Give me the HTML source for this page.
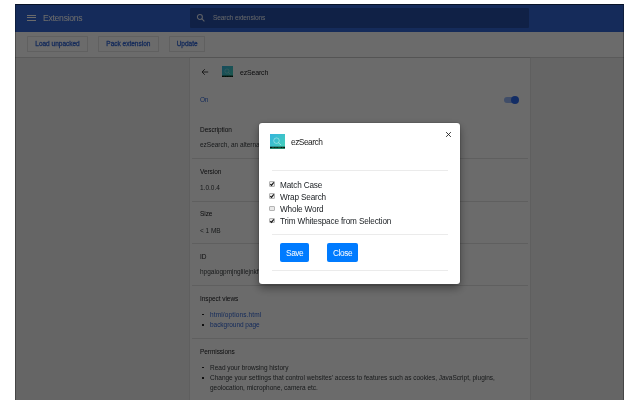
<!DOCTYPE html>
<html><head><meta charset="utf-8">
<style>
*{margin:0;padding:0;box-sizing:border-box}
html,body{width:640px;height:400px;overflow:hidden;background:#fff;font-family:"Liberation Sans",sans-serif}
#shot{position:absolute;left:15px;top:4px;width:609.3px;height:396px;overflow:hidden;background:#f1f1f1}
#inner{position:absolute;left:-15px;top:-4px;width:640px;height:400px}
.a{position:absolute}
.t{position:absolute;white-space:nowrap;line-height:10px;height:10px;will-change:transform}
#toolbar{left:0;top:0;width:640px;height:32px;background:#3367d6}
#search{left:190px;top:8px;width:339px;height:19.5px;background:rgba(0,0,0,0.22);border-radius:1px}
#dev{left:0;top:32px;width:640px;height:26px;background:#fff;border-bottom:0.5px solid #d6d6d6}
.btn{position:absolute;top:36.3px;height:15.5px;border:0.5px solid #e4e4e4;border-radius:0.5px;color:#3367d6;font-size:6.5px;-webkit-text-stroke:0.28px #3367d6;line-height:13.9px;text-align:center;will-change:transform}
#card{left:190px;top:58px;width:340px;height:360px;background:#fff;box-shadow:0 0 1px rgba(0,0,0,0.35)}
.sep{position:absolute;left:192px;width:336px;height:0.5px;background:#e2e2e2}
.h{font-size:6.5px;letter-spacing:-0.06px;color:#202124}
.v{font-size:6.5px;letter-spacing:-0.015px;color:#3c4043}
.lnk{font-size:6.5px;letter-spacing:-0.04px;color:#3367d6}
.bul{position:absolute;width:1.8px;height:1.6px;background:#282828}
#overlay{left:0;top:0;width:640px;height:400px;background:rgba(0,0,0,0.58)}
#modal{left:259px;top:122.9px;width:201.2px;height:161px;background:#fff;border-radius:3px;box-shadow:0 4px 10px rgba(0,0,0,0.4),0 0 2px rgba(0,0,0,0.35)}
.mhr{position:absolute;left:272px;width:176px;height:0.5px;background:#ebebeb}
.lab{font-size:8.2px;letter-spacing:-0.15px;color:#212529}
.cb{position:absolute;left:269.4px;width:6px;height:5.6px;border:0.5px solid #b4b4b4;border-radius:1px;background:#e9e9e9}
.mbtn{position:absolute;top:243.3px;height:18.4px;background:#007bff;border-radius:2px;color:#fff;font-size:8.3px;letter-spacing:-0.4px;line-height:21.6px;text-align:center}
.mbtn span{will-change:transform;display:inline-block}
</style></head><body>
<div id="shot"><div id="inner">
  <!-- toolbar -->
  <div id="toolbar" class="a"></div>
  <div class="a" style="left:27px;top:14.9px;width:9px;height:1px;background:#fff"></div>
  <div class="a" style="left:27px;top:17.3px;width:9px;height:1px;background:#fff"></div>
  <div class="a" style="left:27px;top:19.9px;width:9px;height:1px;background:#fff"></div>
  <div class="t" style="left:43px;top:13px;font-size:8.6px;letter-spacing:-0.27px;color:#fff">Extensions</div>
  <div id="search" class="a"></div>
  <svg class="a" style="left:195.5px;top:13px" width="10" height="10" viewBox="0 0 10 10"><circle cx="3.9" cy="3.9" r="2.5" fill="none" stroke="rgba(255,255,255,0.85)" stroke-width="1.05"/><path d="M5.7 5.7 L8.4 8.3" stroke="rgba(255,255,255,0.85)" stroke-width="1.1"/></svg>
  <div class="t" style="left:213px;top:12.5px;font-size:6.6px;letter-spacing:-0.12px;color:rgba(255,255,255,0.9)">Search extensions</div>
  <!-- dev toolbar -->
  <div id="dev" class="a"></div>
  <div class="btn" style="left:27px;width:61px">Load unpacked</div>
  <div class="btn" style="left:97.5px;width:60.7px">Pack extension</div>
  <div class="btn" style="left:168.5px;width:36.3px">Update</div>
  <!-- card -->
  <div id="card" class="a"></div>
  <svg class="a" style="left:200px;top:67px" width="10" height="10" viewBox="0 0 10 10"><path d="M8.2 5 H2.2 M4.8 2.2 L2 5 L4.8 7.8" fill="none" stroke="#333" stroke-width="0.9"/></svg>
  <svg class="a" style="left:221.75px;top:65.75px" width="11.6" height="11.6" viewBox="0 0 16 16"><defs><linearGradient id="g1" x1="0" y1="0" x2="1" y2="1"><stop offset="0" stop-color="#35b4dd"/><stop offset="1" stop-color="#47d3b6"/></linearGradient></defs><rect width="16" height="16" fill="url(#g1)"/><circle cx="6.8" cy="7" r="2.9" fill="none" stroke="#f2fcff" stroke-opacity="0.6" stroke-width="0.7"/><path d="M8.9 9.2 L11.6 11.5" stroke="#f2fcff" stroke-opacity="0.6" stroke-width="0.8"/><rect x="0" y="13.3" width="16" height="2" fill="#06140e"/><path d="M2 14.3 H4.5 M5.5 14.3 H7 M8 14.3 H11.5 M12.5 14.3 H14" stroke="#2fa35a" stroke-width="0.5"/><rect x="0" y="15.3" width="16" height="0.7" fill="#3ccf9a"/></svg>
  <div class="t" style="left:239.7px;top:67.5px;font-size:7px;letter-spacing:-0.18px;color:#202124">ezSearch</div>
  <div class="t lnk" style="left:199.8px;top:95.30px;letter-spacing:-0.3px">On</div>
  <div class="a" style="left:504px;top:97px;width:14px;height:6px;border-radius:3px;background:#98b8f8"></div>
  <div class="a" style="left:511.4px;top:96px;width:8px;height:8px;border-radius:50%;background:#2f6cf0"></div>
  <div class="t h" style="left:200px;top:124.50px">Description</div>
  <div class="t v" style="left:200px;top:140.30px">ezSearch, an alternative search for Chrome</div>
  <div class="sep" style="top:158.3px"></div>
  <div class="t h" style="left:200px;top:166.90px">Version</div>
  <div class="t v" style="left:200px;top:182.90px">1.0.0.4</div>
  <div class="sep" style="top:200.8px"></div>
  <div class="t h" style="left:200px;top:209.10px">Size</div>
  <div class="t v" style="left:200px;top:225.50px">&lt; 1 MB</div>
  <div class="sep" style="top:243.3px"></div>
  <div class="t h" style="left:200px;top:252.00px">ID</div>
  <div class="t v" style="left:200px;top:267.30px">hpgaiogpmjnglilejnkfbmnhaimhkpgk</div>
  <div class="sep" style="top:285.3px"></div>
  <div class="t h" style="left:200px;top:294.25px">Inspect views</div>
  <div class="bul" style="left:202px;top:313.90px"></div>
  <div class="t lnk" style="left:210px;top:309.90px;letter-spacing:0.13px">html/options.html</div>
  <div class="bul" style="left:202px;top:324.00px"></div>
  <div class="t lnk" style="left:210px;top:320.00px">background page</div>
  <div class="sep" style="top:338.3px"></div>
  <div class="t h" style="left:200px;top:346.50px">Permissions</div>
  <div class="bul" style="left:202px;top:366.50px"></div>
  <div class="t v" style="left:210px;top:362.50px">Read your browsing history</div>
  <div class="bul" style="left:202px;top:377.00px"></div>
  <div class="t v" style="left:210px;top:373.00px">Change your settings that control websites' access to features such as cookies, JavaScript, plugins,</div>
  <div class="t v" style="left:210px;top:383.00px">geolocation, microphone, camera etc.</div>
  <!-- overlay -->
  <div id="overlay" class="a"></div>
  <!-- modal -->
  <div id="modal" class="a"></div>
  <svg class="a" style="left:269.7px;top:133.7px" width="15.3" height="15.3" viewBox="0 0 16 16"><defs><linearGradient id="g2" x1="0" y1="0" x2="1" y2="1"><stop offset="0" stop-color="#35b4dd"/><stop offset="1" stop-color="#47d3b6"/></linearGradient></defs><rect width="16" height="16" fill="url(#g2)"/><circle cx="6.8" cy="7" r="2.9" fill="none" stroke="#f2fcff" stroke-opacity="0.6" stroke-width="0.7"/><path d="M8.9 9.2 L11.6 11.5" stroke="#f2fcff" stroke-opacity="0.6" stroke-width="0.8"/><rect x="0" y="13.3" width="16" height="2" fill="#06140e"/><path d="M2 14.3 H4.5 M5.5 14.3 H7 M8 14.3 H11.5 M12.5 14.3 H14" stroke="#2fa35a" stroke-width="0.5"/><rect x="0" y="15.3" width="16" height="0.7" fill="#3ccf9a"/></svg>
  <div class="t" style="left:290.9px;top:136.9px;font-size:8.4px;letter-spacing:-0.5px;color:#222">ezSearch</div>
  <svg class="a" style="left:444px;top:130px" width="9" height="9" viewBox="0 0 9 9"><path d="M2.1 2.1 L6.9 6.9 M6.9 2.1 L2.1 6.9" stroke="#1a1a1a" stroke-width="0.85"/></svg>
  <div class="mhr" style="top:170.3px"></div>
  <div class="cb" style="top:181.40px"></div>
  <svg class="a" style="left:269.4px;top:181.40px" width="6" height="6" viewBox="0 0 6 6"><path d="M1.3 3.1 L2.5 4.3 L4.8 1.4" fill="none" stroke="#111" stroke-width="1.1"/></svg>
  <div class="t lab" style="left:279.7px;top:180.50px">Match Case</div>
  <div class="cb" style="top:193.45px"></div>
  <svg class="a" style="left:269.4px;top:193.45px" width="6" height="6" viewBox="0 0 6 6"><path d="M1.3 3.1 L2.5 4.3 L4.8 1.4" fill="none" stroke="#111" stroke-width="1.1"/></svg>
  <div class="t lab" style="left:279.7px;top:192.55px">Wrap Search</div>
  <div class="cb" style="top:205.50px"></div>
  <div class="t lab" style="left:279.7px;top:204.60px">Whole Word</div>
  <div class="cb" style="top:217.55px"></div>
  <svg class="a" style="left:269.4px;top:217.55px" width="6" height="6" viewBox="0 0 6 6"><path d="M1.3 3.1 L2.5 4.3 L4.8 1.4" fill="none" stroke="#111" stroke-width="1.1"/></svg>
  <div class="t lab" style="left:279.7px;top:216.65px">Trim Whitespace from Selection</div>
  <div class="mhr" style="top:233.8px"></div>
  <div class="mbtn" style="left:279.9px;width:28.9px"><span>Save</span></div>
  <div class="mbtn" style="left:326.8px;width:31.2px"><span>Close</span></div>
  <div class="mhr" style="top:270px"></div>
</div></div>
<div style="position:absolute;left:15px;top:4px;width:609.3px;height:400px;border:1px solid rgba(0,0,0,0.3);border-top-color:rgba(0,0,0,0.55);border-bottom:none"></div>
</body></html>
